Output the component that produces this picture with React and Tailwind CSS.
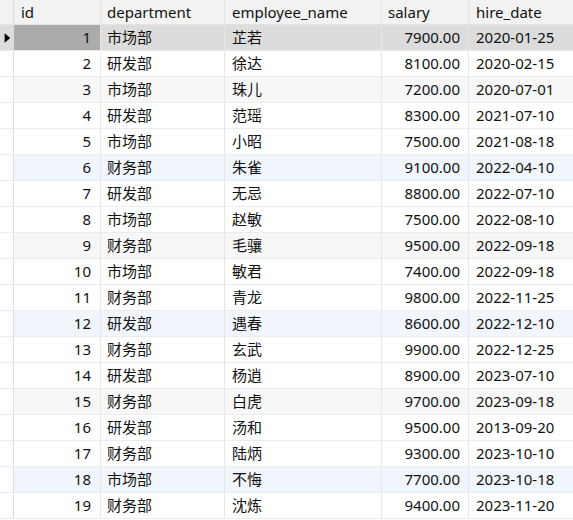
import React from 'react'

const rows = [
  [1, '市场部', '芷若', '7900.00', '2020-01-25'],
  [2, '研发部', '徐达', '8100.00', '2020-02-15'],
  [3, '市场部', '珠儿', '7200.00', '2020-07-01'],
  [4, '研发部', '范瑶', '8300.00', '2021-07-10'],
  [5, '市场部', '小昭', '7500.00', '2021-08-18'],
  [6, '财务部', '朱雀', '9100.00', '2022-04-10'],
  [7, '研发部', '无忌', '8800.00', '2022-07-10'],
  [8, '市场部', '赵敏', '7500.00', '2022-08-10'],
  [9, '财务部', '毛骧', '9500.00', '2022-09-18'],
  [10, '市场部', '敏君', '7400.00', '2022-09-18'],
  [11, '财务部', '青龙', '9800.00', '2022-11-25'],
  [12, '研发部', '遇春', '8600.00', '2022-12-10'],
  [13, '财务部', '玄武', '9900.00', '2022-12-25'],
  [14, '研发部', '杨逍', '8900.00', '2023-07-10'],
  [15, '财务部', '白虎', '9700.00', '2023-09-18'],
  [16, '研发部', '汤和', '9500.00', '2013-09-20'],
  [17, '财务部', '陆炳', '9300.00', '2023-10-10'],
  [18, '市场部', '不悔', '7700.00', '2023-10-18'],
  [19, '财务部', '沈炼', '9400.00', '2023-11-20'],
]

function rowBg(id) {
  if (id === 1) return 'bg-[#dcdcdc]'
  if (id % 6 === 0) return 'bg-[#f1f6fc]'
  if (id % 3 === 0) return 'bg-[#f7f7f7]'
  return 'bg-white'
}

export default function App() {
  return (
    <div
      className="w-[573px] h-[520px] overflow-hidden bg-white text-[15px] text-[#111]"
      style={{ fontFamily: '"Noto Sans", "Noto Sans CJK SC", sans-serif' }}
    >
      <div className="flex h-[25px] bg-[#f2f2f2] border-b border-[#e3e3e3] leading-none">
        <div className="w-[14px] shrink-0 border-r border-[#dadada]" />
        <div className="w-[87px] shrink-0 border-r border-[#e3e3e3] flex items-center pl-[7px]">id</div>
        <div className="w-[124px] shrink-0 border-r border-[#e3e3e3] flex items-center pl-[6px]">department</div>
        <div className="w-[157px] shrink-0 border-r border-[#e3e3e3] flex items-center pl-[7px]">employee_name</div>
        <div className="w-[87px] shrink-0 border-r border-[#e3e3e3] flex items-center pl-[6px]">salary</div>
        <div className="flex-1 flex items-center pl-[7px]">hire_date</div>
      </div>
      {rows.map(([id, dept, name, salary, date]) => {
        const selected = id === 1
        return (
          <div key={id} className={`flex h-[26px] leading-none border-b border-[#ececec] ${rowBg(id)}`}>
            <div
              className={`w-[14px] shrink-0 border-r border-[#dadada] flex items-center ${selected ? 'bg-[#dcdcdc]' : 'bg-white'}`}
            >
              {selected && (
                <svg width="14" height="26" viewBox="0 0 14 26">
                  <path d="M5 8 L11 13 L5 18 Z" fill="#000" />
                </svg>
              )}
            </div>
            <div
              className={`w-[87px] shrink-0 border-r border-[#e6e6e6] flex items-center justify-end pr-[9px] ${selected ? 'bg-[#ababab]' : ''}`}
            >
              {id}
            </div>
            <div className="w-[124px] shrink-0 border-r border-[#e6e6e6] flex items-center pl-[6px]">{dept}</div>
            <div className="w-[157px] shrink-0 border-r border-[#e6e6e6] flex items-center pl-[7px]">{name}</div>
            <div className="w-[87px] shrink-0 border-r border-[#e6e6e6] flex items-center justify-end pr-[8px]">{salary}</div>
            <div className="flex-1 flex items-center pl-[7px]">{date}</div>
          </div>
        )
      })}
    </div>
  )
}
